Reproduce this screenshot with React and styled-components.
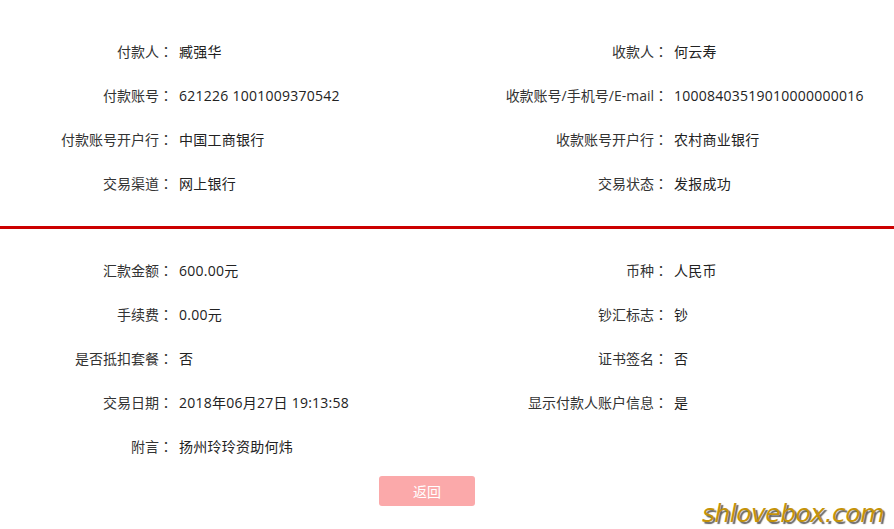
import styled, { createGlobalStyle } from "styled-components";

const GlobalStyle = createGlobalStyle`
  body {
    margin: 0;
    background: #fff;
    font-family: "Open Sans", "Noto Sans CJK SC", sans-serif;
    color: #333;
  }
`;

const Page = styled.div`
  position: relative;
  width: 894px;
  height: 529px;
  overflow: hidden;
  background: #fff;
`;

const Section = styled.div`
  display: grid;
  grid-template-columns: 173px 1fr auto 226px;
  grid-auto-rows: 44px;
  padding: ${(p) => p.$padding};
`;

const Label = styled.div`
  display: flex;
  align-items: center;
  justify-content: flex-end;
  font-size: 14px;
  white-space: nowrap;
  color: #333;
`;

const Colon = styled.span`
  font-family: "Noto Sans CJK TC", sans-serif;
`;

const Value = styled.div`
  display: flex;
  align-items: center;
  padding-left: 6px;
  font-size: 14px;
  letter-spacing: 0.25px;
  white-space: nowrap;
  color: #222;
`;

const Divider = styled.div`
  height: 3px;
  background: #cc0000;
`;

const ButtonRow = styled.div`
  display: flex;
  padding-left: 379px;
  padding-top: 8px;
`;

const BackButton = styled.button`
  width: 96px;
  height: 30px;
  border: none;
  border-radius: 3px;
  background: #fba9aa;
  color: #fff;
  font-family: "Noto Sans CJK SC", sans-serif;
  font-size: 14px;
  cursor: pointer;
`;

const Watermark = styled.div`
  position: absolute;
  right: 10px;
  bottom: 1px;
  font-family: "DejaVu Sans", sans-serif;
  font-style: italic;
  font-size: 25px;
  letter-spacing: -0.5px;
  color: #c5930a;
  text-shadow: 2px 2px 1px #666;
`;

const topRows = [
  ["付款人", "臧强华", "收款人", "何云寿"],
  ["付款账号", "621226 1001009370542", "收款账号/手机号/E-mail", "10008403519010000000016"],
  ["付款账号开户行", "中国工商银行", "收款账号开户行", "农村商业银行"],
  ["交易渠道", "网上银行", "交易状态", "发报成功"],
];

const bottomRows = [
  ["汇款金额", "600.00元", "币种", "人民币"],
  ["手续费", "0.00元", "钞汇标志", "钞"],
  ["是否抵扣套餐", "否", "证书签名", "否"],
  ["交易日期", "2018年06月27日 19:13:58", "显示付款人账户信息", "是"],
  ["附言", "扬州玲玲资助何炜"],
];

function Rows({ rows }) {
  return rows.map((r, i) => [
    <Label key={`l1${i}`}>
      {r[0]}
      <Colon>：</Colon>
    </Label>,
    <Value key={`v1${i}`}>{r[1]}</Value>,
    <Label key={`l2${i}`}>
      {r[2] && (
        <>
          {r[2]}
          <Colon>：</Colon>
        </>
      )}
    </Label>,
    <Value key={`v2${i}`}>{r[3] || ""}</Value>,
  ]);
}

export default function App() {
  return (
    <Page>
      <GlobalStyle />
      <Section $padding="29px 0 21px">
        <Rows rows={topRows} />
      </Section>
      <Divider />
      <Section $padding="19px 0 0">
        <Rows rows={bottomRows} />
      </Section>
      <ButtonRow>
        <BackButton>返回</BackButton>
      </ButtonRow>
      <Watermark>shlovebox.com</Watermark>
    </Page>
  );
}
